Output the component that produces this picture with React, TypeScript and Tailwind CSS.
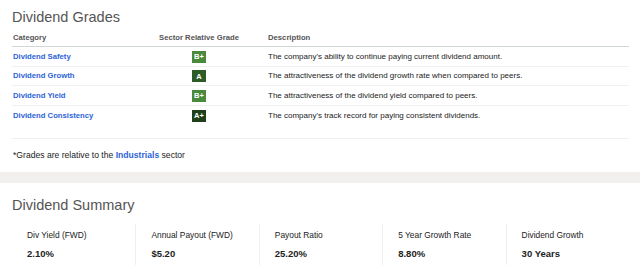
import React from "react";

const rows = [
  { cat: "Dividend Safety", grade: "B+", color: "bg-[#4a8a3c]", desc: "The company's ability to continue paying current dividend amount." },
  { cat: "Dividend Growth", grade: "A", color: "bg-[#2e5a27]", desc: "The attractiveness of the dividend growth rate when compared to peers." },
  { cat: "Dividend Yield", grade: "B+", color: "bg-[#4a8a3c]", desc: "The attractiveness of the dividend yield compared to peers." },
  { cat: "Dividend Consistency", grade: "A+", color: "bg-[#1f3f1b]", desc: "The company's track record for paying consistent dividends." },
];

const metrics = [
  { label: "Div Yield (FWD)", value: "2.10%" },
  { label: "Annual Payout (FWD)", value: "$5.20" },
  { label: "Payout Ratio", value: "25.20%" },
  { label: "5 Year Growth Rate", value: "8.80%" },
  { label: "Dividend Growth", value: "30 Years" },
];

export default function App() {
  return (
    <div className="w-[640px] h-[273px] bg-white overflow-hidden" style={{ fontFamily: '"Liberation Sans", Arial, sans-serif' }}>
      <div className="pl-[12px] pr-[11px]">
        <div className="pt-[9px] h-[30px] text-[14.5px] leading-[17px] text-[#555]">Dividend Grades</div>
        <div className="flex items-center h-[17px] border-b border-[#cfd6d4] text-[7.7px] font-bold text-[#555]">
          <div className="w-[118px] pl-[1px]">Category</div>
          <div className="w-[138px] text-center">Sector Relative Grade</div>
          <div>Description</div>
        </div>
        {rows.map((r, i) => (
          <div key={r.cat} className={`flex items-center h-[19.5px] pt-[1px] ${i < rows.length - 1 ? "border-b border-[#f0f0f0]" : ""}`}>
            <div className="w-[118px] pl-[1px] text-[7.7px] font-bold text-[#2d63d8] whitespace-nowrap">{r.cat}</div>
            <div className="w-[138px] flex justify-center">
              <span className={`${r.color} text-white text-[7.5px] font-bold h-[12px] w-[14px] flex items-center justify-center`}>{r.grade}</span>
            </div>
            <div className="text-[8px] text-[#222]">{r.desc}</div>
          </div>
        ))}
        <div className="mt-[13px] border-t border-[#efefef] h-[34px] flex items-center text-[8.6px] text-[#222] pl-[1px]">
          *Grades are relative to the&nbsp;<span className="font-bold text-[#2d63d8]">Industrials</span>&nbsp;sector
        </div>
      </div>
      <div className="h-[11px] bg-[#f1f0ee]" />
      <div className="pl-[12px] pr-[11px]">
        <div className="pt-[14px] h-[41px] text-[14.5px] leading-[17px] text-[#555]">Dividend Summary</div>
        <div className="grid grid-cols-5 h-[41px]">
          {metrics.map((m, i) => (
            <div key={m.label} className={`pl-[15px] pt-[6px] ${i > 0 ? "border-l border-[#efefef]" : ""}`}>
              <div className="text-[8.4px] leading-[11px] text-[#222]">{m.label}</div>
              <div className="mt-[7px] text-[9.5px] leading-[12px] font-bold text-[#222]">{m.value}</div>
            </div>
          ))}
        </div>
      </div>
    </div>
  );
}
